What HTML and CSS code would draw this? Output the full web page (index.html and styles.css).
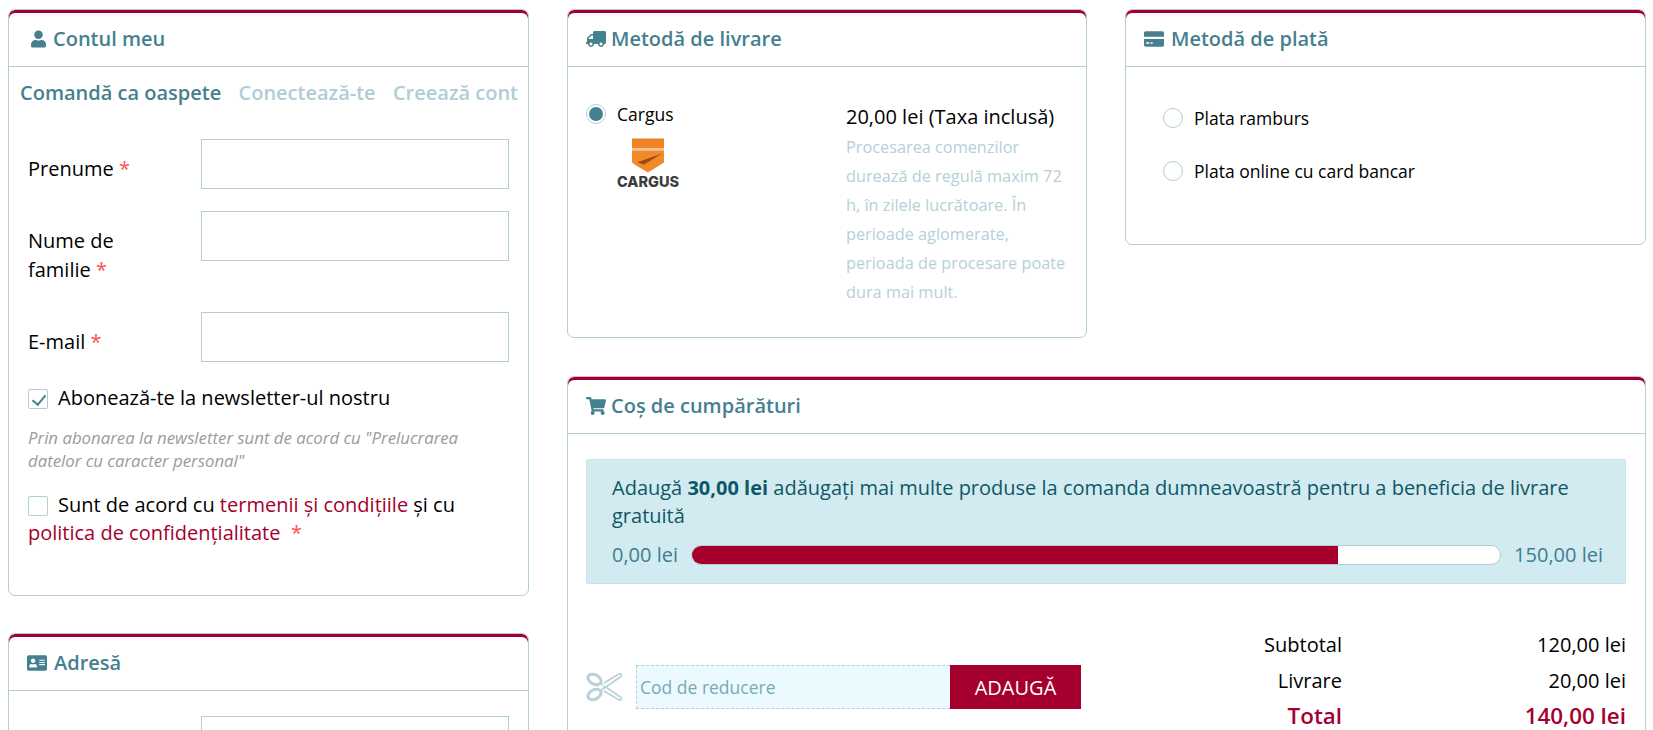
FILE: index.html
```html
<!DOCTYPE html>
<html lang="ro">
<head>
<meta charset="utf-8">
<title>Finalizare comandă</title>
<link rel="stylesheet" href="styles.css">
</head>
<body>
<main class="page">
  <div class="col-left">
    <section class="card">
      <h2 class="card-head">
        <svg class="ico ico-user" viewBox="0 0 448 512"><path d="M224 256c70.7 0 128-57.3 128-128S294.7 0 224 0 96 57.3 96 128s57.3 128 128 128zm89.6 32h-16.7c-22.2 10.2-46.9 16-72.9 16s-50.6-5.8-72.9-16h-16.7C60.2 288 0 348.2 0 422.4V464c0 26.5 21.5 48 48 48h352c26.5 0 48-21.5 48-48v-41.6c0-74.2-60.2-134.4-134.4-134.4z"/></svg>
        Contul meu
      </h2>
      <div class="account-body">
        <nav class="tabs">
          <span class="tab tab-active">Comandă ca oaspete</span>
          <span class="tab">Conectează-te</span>
          <span class="tab">Creează cont</span>
        </nav>
        <form class="form">
          <div class="field"><label>Prenume <span class="req">*</span></label><input class="text-input" type="text"></div>
          <div class="field"><label>Nume de familie <span class="req">*</span></label><input class="text-input" type="text"></div>
          <div class="field"><label>E-mail <span class="req">*</span></label><input class="text-input" type="text"></div>
          <div class="check-line"><input class="check" type="checkbox" checked><span>Abonează-te la newsletter-ul nostru</span></div>
          <p class="note">Prin abonarea la newsletter sunt de acord cu "Prelucrarea datelor cu caracter personal"</p>
          <p class="terms"><input class="check check-float" type="checkbox">Sunt de acord cu <a class="link">termenii și condițiile</a> și cu <a class="link">politica de confidențialitate</a> &nbsp;<span class="req">*</span></p>
        </form>
      </div>
    </section>
    <section class="card">
      <h2 class="card-head">
        <svg class="ico ico-wide" viewBox="0 0 576 512"><path d="M528 32H48C21.5 32 0 53.5 0 80v352c0 26.5 21.5 48 48 48h480c26.5 0 48-21.5 48-48V80c0-26.5-21.5-48-48-48zm-352 96c35.3 0 64 28.7 64 64s-28.7 64-64 64-64-28.7-64-64 28.7-64 64-64zm112 236.8c0 10.6-10 19.2-22.4 19.2H86.4C74 384 64 375.4 64 364.8v-19.2c0-31.8 30.1-57.6 67.2-57.6h5c12.3 5.1 25.7 8 39.8 8s27.6-2.9 39.8-8h5c37.1 0 67.2 25.8 67.2 57.6v19.2zM512 312c0 4.4-3.6 8-8 8H360c-4.4 0-8-3.6-8-8v-16c0-4.4 3.6-8 8-8h144c4.4 0 8 3.6 8 8v16zm0-64c0 4.4-3.6 8-8 8H360c-4.4 0-8-3.6-8-8v-16c0-4.4 3.6-8 8-8h144c4.4 0 8 3.6 8 8v16zm0-64c0 4.4-3.6 8-8 8H360c-4.4 0-8-3.6-8-8v-16c0-4.4 3.6-8 8-8h144c4.4 0 8 3.6 8 8v16z"/></svg>
        Adresă
      </h2>
      <div class="address-body">
        <div class="field"><input class="text-input input-offset" type="text"></div>
      </div>
    </section>
  </div>

  <div class="col-right">
    <section class="card">
      <h2 class="card-head head-tight">
        <svg class="ico ico-truck" viewBox="0 0 640 512"><path d="M624 352h-16V243.9c0-12.7-5.1-24.9-14.1-33.9L494 110.1c-9-9-21.2-14.1-33.9-14.1H416V48c0-26.5-21.5-48-48-48H48C21.5 0 0 21.5 0 48v320c0 26.5 21.5 48 48 48h16c0 53 43 96 96 96s96-43 96-96h128c0 53 43 96 96 96s96-43 96-96h48c8.8 0 16-7.2 16-16v-32c0-8.8-7.2-16-16-16zM160 464c-26.5 0-48-21.5-48-48s21.5-48 48-48 48 21.5 48 48-21.5 48-48 48zm320 0c-26.5 0-48-21.5-48-48s21.5-48 48-48 48 21.5 48 48-21.5 48-48 48zm80-208H416V144h44.1l99.9 99.9V256z"/></svg>
        Metodă de livrare
      </h2>
      <div class="shipping">
        <div class="ship-left">
          <div class="radio-line"><input class="radio" type="radio" name="ship" checked><span class="radio-label">Cargus</span></div>
          <div class="cargus">
            <svg class="cargus-mark" viewBox="0 0 32 34">
              <rect width="32" height="10" fill="#ee8426"/>
              <rect y="10" width="32" height="2" fill="#f6c190"/>
              <path d="M0 12H32V24L16 34L4 27L0 24Z" fill="#f08a2a"/>
              <path d="M5 24L30 15L12 26Z" fill="#9a4a12"/>
            </svg>
            <span class="cargus-name">CARGUS</span>
          </div>
        </div>
        <div class="ship-right">
          <div class="price">20,00 lei (Taxa inclusă)</div>
          <p class="ship-desc">Procesarea comenzilor durează de regulă maxim 72 h, în zilele lucrătoare. În perioade aglomerate, perioada de procesare poate dura mai mult.</p>
        </div>
      </div>
    </section>

    <section class="card">
      <h2 class="card-head">
        <svg class="ico ico-wide" viewBox="0 0 576 512"><path d="M0 432c0 26.5 21.5 48 48 48h480c26.5 0 48-21.5 48-48V256H0v176zm64-68c0-6.6 5.4-12 12-12h72c6.6 0 12 5.4 12 12v20c0 6.6-5.4 12-12 12H76c-6.6 0-12-5.4-12-12v-20zm128 0c0-6.6 5.4-12 12-12h36c6.6 0 12 5.4 12 12v20c0 6.6-5.4 12-12 12h-36c-6.6 0-12-5.4-12-12v-20zM576 80v112H0V80c0-26.5 21.5-48 48-48h480c26.5 0 48 21.5 48 48z"/></svg>
        Metodă de plată
      </h2>
      <div class="payment">
        <div class="radio-line"><input class="radio" type="radio" name="pay"><span class="radio-label">Plata ramburs</span></div>
        <div class="radio-line"><input class="radio" type="radio" name="pay"><span class="radio-label">Plata online cu card bancar</span></div>
      </div>
    </section>

    <section class="card card-full">
      <h2 class="card-head head-tight">
        <svg class="ico ico-wide" viewBox="0 0 576 512"><path d="M528.12 301.319l47.273-208C578.806 78.301 567.391 64 551.99 64H159.208l-9.166-44.81C147.758 8.021 137.93 0 126.529 0H24C10.745 0 0 10.745 0 24v16c0 13.255 10.745 24 24 24h69.883l70.248 343.435C147.325 417.1 136 435.222 136 456c0 30.928 25.072 56 56 56s56-25.072 56-56c0-15.674-6.447-29.835-16.824-40h209.647C430.447 426.165 424 440.326 424 456c0 30.928 25.072 56 56 56s56-25.072 56-56c0-22.172-12.888-41.332-31.579-50.405l5.517-24.276c3.413-15.018-8.002-29.319-23.403-29.319H218.117l-6.545-32h293.145c11.206 0 20.92-7.754 23.403-18.681z"/></svg>
        Coș de cumpărături
      </h2>
      <div class="cart">
        <div class="alert">
          <p class="alert-text">Adaugă <strong>30,00 lei</strong> adăugați mai multe produse la comanda dumneavoastră pentru a beneficia de livrare gratuită</p>
          <div class="progress-row">
            <span>0,00 lei</span>
            <div class="progress"><div class="progress-fill" style="width:80%"></div></div>
            <span>150,00 lei</span>
          </div>
        </div>
        <div class="summary">
          <div class="coupon">
            <svg class="scissors" viewBox="0 0 38 30" fill="none">
              <ellipse cx="8.5" cy="7.5" rx="7" ry="4.6" transform="rotate(28 8.5 7.5)" stroke="#b7d2d8" stroke-width="3"/>
              <ellipse cx="8.5" cy="22.5" rx="7" ry="4.6" transform="rotate(-28 8.5 22.5)" stroke="#b7d2d8" stroke-width="3"/>
              <path d="M14 11L35 25.5C36.5 27 35 28.5 33 28L18 19" stroke="#b7d2d8" stroke-width="1.6" fill="#fff" stroke-linejoin="round"/>
              <path d="M14 19L35 4.5C36.5 3 35 1.5 33 2L18 11" stroke="#b7d2d8" stroke-width="1.6" fill="#fff" stroke-linejoin="round"/>
              <circle cx="18.5" cy="15" r="1.4" fill="#b7d2d8"/>
            </svg>
            <input class="coupon-input" type="text" placeholder="Cod de reducere">
            <button class="coupon-btn" type="button">ADAUGĂ</button>
          </div>
          <dl class="totals">
            <dt>Subtotal</dt><dd>120,00 lei</dd>
            <dt>Livrare</dt><dd>20,00 lei</dd>
            <dt class="total">Total</dt><dd class="total">140,00 lei</dd>
          </dl>
        </div>
      </div>
    </section>
  </div>
</main>
</body>
</html>
```
FILE: styles.css
```css
* { box-sizing: border-box; }
html, body { margin: 0; height: 100%; overflow: hidden; background: #fff; }
body { font-family: "Open Sans", "Noto Sans", sans-serif; font-size: 20px; line-height: 28.8px; color: #000; }

.page { display: grid; grid-template-columns: 521px 1079px; column-gap: 38px; padding: 9px 0 0 8px; align-items: start; }
.col-left { display: flex; flex-direction: column; gap: 37px; }
.col-right { display: grid; grid-template-columns: 520px 521px; gap: 38px; align-items: start; }
.card-full { grid-column: 1 / -1; }

.card { background: #fff; border: 1px solid #b2ced5; border-radius: 7px; box-shadow: inset 0 3px 0 #a5002d; }
.card-head { display: flex; align-items: center; gap: 7px; height: 57px; margin: 0; padding: 2px 18px 0; border-bottom: 1px solid #b2ced5; font-size: 20px; font-weight: 600; color: #45808f; }
.head-tight { gap: 5px; }
.ico { fill: #45808f; flex: none; }
.ico-user { width: 15px; height: 18px; margin-left: 4px; }
.ico-wide { width: 20px; height: 18px; }
.ico-truck { width: 20px; height: 18px; transform: scaleX(-1); }

.account-body { padding: 12px 10px 0 11px; height: 528px; }
.tabs { display: flex; justify-content: space-between; font-weight: 600; color: #afcdd4; }
.tab-active { color: #45808f; }
.form { margin-top: 31px; padding-left: 8px; }
.field { display: grid; grid-template-columns: 173px 308px; }
.field label { padding: 16px 30px 27.4px 0; }
.text-input { height: 50px; border: 1px solid #b2ced5; background: #fff; border-radius: 0; padding: 0 8px; }
.input-offset { grid-column: 2; }
.req { color: #ff4d4d; }

.check { appearance: none; width: 20px; height: 20px; margin: 0; border: 1px solid #b2ced5; border-radius: 2px; background: #fff; position: relative; flex: none; }
.check:checked::after { content: ""; position: absolute; left: 6px; top: 2px; width: 6px; height: 11px; border: solid #45808f; border-width: 0 2px 2px 0; transform: rotate(40deg); }
.check-line { display: flex; align-items: center; gap: 10px; }
.note { margin: 13px 20px 0 0; font-size: 16.8px; line-height: 23px; font-style: italic; color: #9b9b9b; }
.terms { margin: 19px 0 0; line-height: 28px; }
.check-float { float: left; margin: 5px 10px 0 0; }
.link { color: #a5002d; }
.address-body { padding: 25px 10px 0 19px; }

.shipping { display: flex; padding: 34px 18px 0; height: 270px; }
.ship-left { width: 260px; flex: none; }
.radio-line { display: flex; align-items: center; gap: 11px; font-size: 17.5px; }
.radio-label { line-height: 26px; }
.radio { appearance: none; width: 20px; height: 20px; margin: 0; border: 1px solid #b2ced5; border-radius: 50%; background: #fff; position: relative; flex: none; }
.radio:checked::after { content: ""; position: absolute; inset: 2px; border-radius: 50%; background: #45808f; }
.cargus { display: flex; flex-direction: column; align-items: center; width: 64px; margin: 11px 0 0 30px; }
.cargus-mark { width: 32px; height: 35px; display: block; }
.cargus-name { font-family: "Inter", "Liberation Sans", sans-serif; font-size: 14.5px; font-weight: 800; line-height: 14px; color: #3d3d3d; margin-top: 2px; }
.ship-right { flex: 1; margin-top: 2px; }
.price { line-height: 28px; }
.ship-desc { margin: 2px 0 0; font-size: 16.3px; line-height: 29px; color: #b5d0d7; width: 224px; }

.payment { display: flex; flex-direction: column; gap: 27px; padding: 38px 37px 0; height: 177px; }

.cart { padding: 25px 19px 0 18px; }
.alert { background: #d1ebf0; border: 1px solid #c4e4ea; border-radius: 2px; padding: 14px 22px 0 25px; height: 125px; color: #0f5766; }
.alert-text { margin: 0; line-height: 28px; }
.progress-row { display: flex; align-items: center; gap: 13px; margin-top: 5px; color: #3f7d92; height: 40px; }
.progress { flex: 1; height: 20px; background: #fff; border: 1px solid #b2ced5; border-radius: 10px; overflow: hidden; }
.progress-fill { height: 100%; background: #a5002d; }

.summary { display: flex; justify-content: space-between; margin-top: 43px; }
.coupon { display: flex; align-items: center; margin-top: 38px; height: 44px; }
.scissors { width: 38px; height: 30px; margin-right: 12px; flex: none; }
.coupon-input { width: 314px; height: 44px; border: 1px dashed #b2ced5; border-right: 0; background: #ebfafe; padding: 0 3px; font: inherit; font-size: 17.5px; color: #45808f; border-radius: 0; }
.coupon-input::placeholder { color: #7ca8b3; opacity: 1; }
.coupon-btn { width: 131px; height: 44px; border: 0; background: #a5002d; color: #fff; font: inherit; padding: 3px 0 0; }
.totals { display: grid; grid-template-columns: auto 284px; grid-auto-rows: 36px; margin: 0; line-height: 36px; }
.totals dt { text-align: right; }
.totals dd { margin: 0; text-align: right; }
.totals .total { font-size: 22.4px; line-height: 34px; font-weight: 600; color: #a5002d; }
```
